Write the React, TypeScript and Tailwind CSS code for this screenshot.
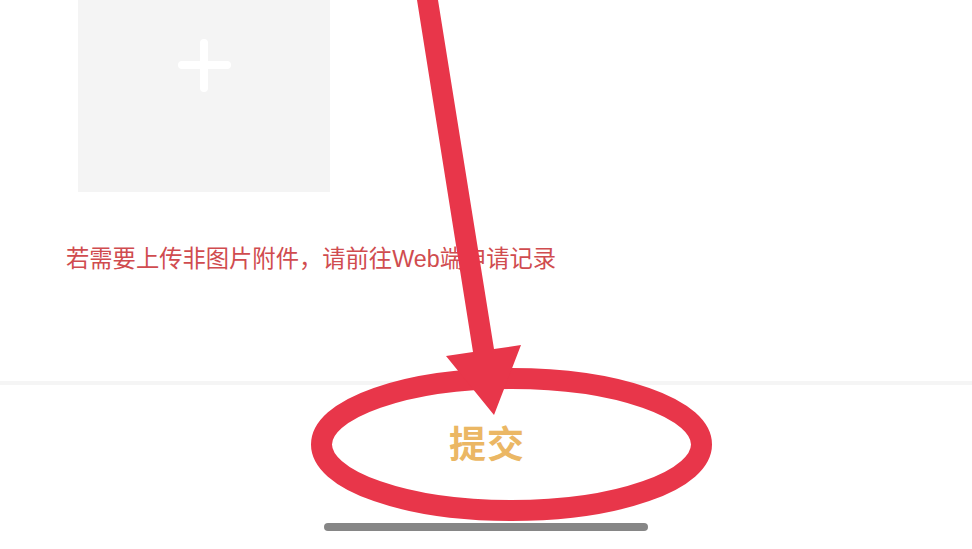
import React from 'react';

// red hand-drawn annotation on top of the screenshot
const Annotation = () => (
  <svg className="absolute inset-0 pointer-events-none" width="972" height="549" viewBox="0 0 972 549">
    <ellipse cx="511.5" cy="444.5" rx="190" ry="66" fill="none" stroke="#e8364a" strokeWidth="21" />
    <polygon points="417,0 438,0 494,349 521,345 494,415 446,356 473,352" fill="#e8364a" />
  </svg>
);

export default function App() {
  return (
    <div className="relative w-[972px] h-[549px] overflow-hidden bg-white flex flex-col font-['Liberation_Serif','Noto_Sans_CJK_SC',serif]">
      <div className="flex-1 flex flex-col">
        <div className="ml-[78px] w-[252px] h-[192px] bg-[#f4f4f4] flex justify-center pt-[39px] pl-[1px]">
          <div className="relative w-[53px] h-[53px]">
            <div className="absolute left-0 top-[22px] w-[53px] h-[8px] rounded-full bg-white" />
            <div className="absolute left-[22px] top-0 w-[8px] h-[53px] rounded-full bg-white" />
          </div>
        </div>
        <p className="ml-[66px] mt-[52px] text-[23.3px] leading-[30px] whitespace-nowrap text-[#d04c4f] font-['Liberation_Sans','Noto_Sans_CJK_SC',sans-serif]">
          若需要上传非图片附件，请前往Web端申请记录
        </p>
      </div>
      <div className="h-[168px] border-t-[4px] border-[#f5f5f5] flex flex-col items-center">
        <div className="ml-[2px] mt-[34px] text-[37px] leading-[46px] font-bold tracking-[1px] text-[#ebb764] font-['Noto_Sans_CJK_SC',sans-serif]">
          提交
        </div>
        <div className="mt-[58px] w-[324px] h-[8px] rounded-full bg-[#868686]" />
      </div>
      <Annotation />
    </div>
  );
}
